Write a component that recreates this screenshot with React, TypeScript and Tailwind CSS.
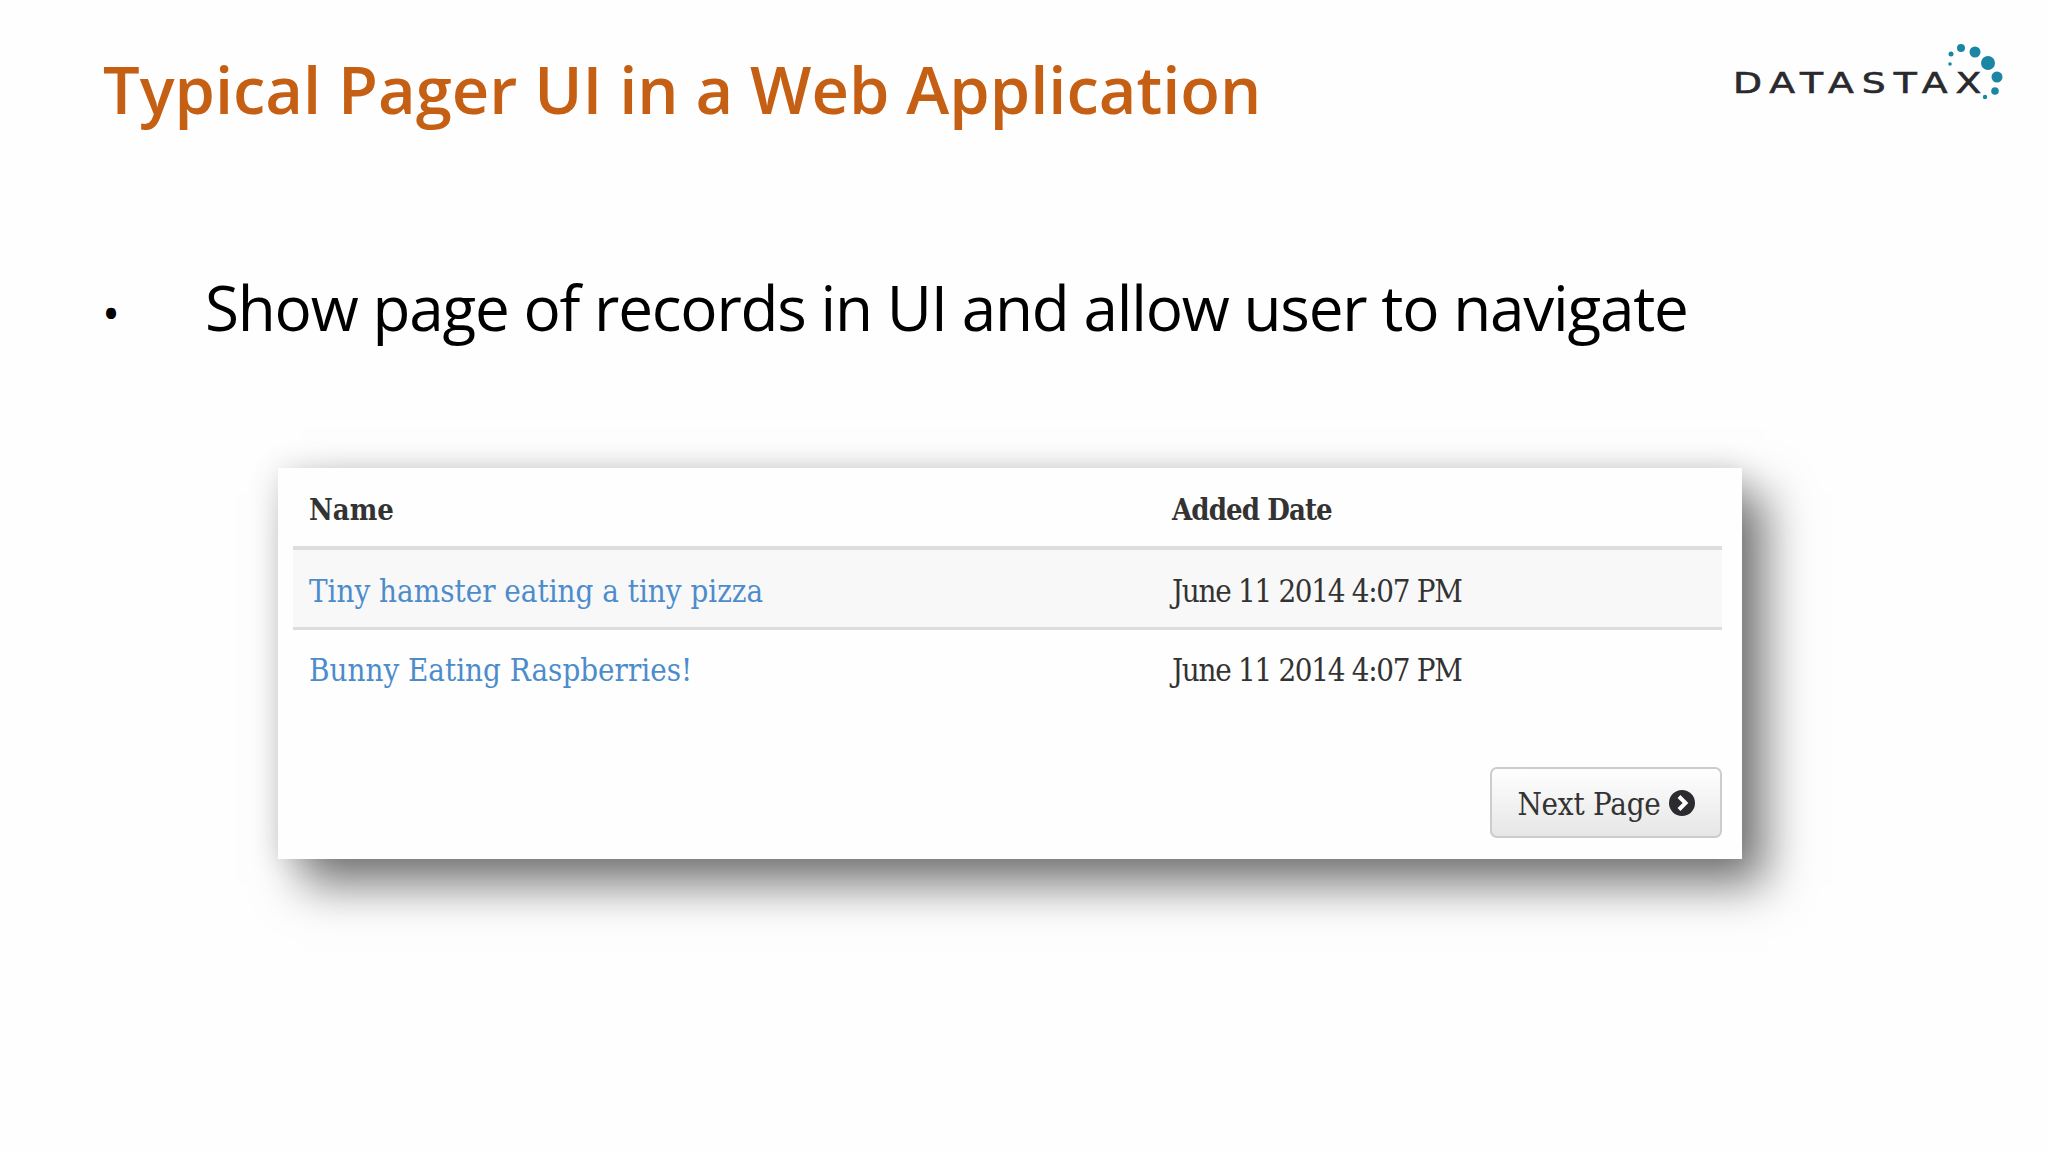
const slab = "font-['DejaVu_Serif',serif] [font-stretch:condensed]";

const rows = [
  { name: "Tiny hamster eating a tiny pizza", date: "June 11 2014 4:07 PM", striped: true },
  { name: "Bunny Eating Raspberries!", date: "June 11 2014 4:07 PM", striped: false },
];

const Logo = () => (
  <div className="relative mt-[40px] h-[70px] w-[280px] shrink-0">
    <span className="absolute left-[-1px] top-[25px] origin-left scale-x-[1.3] font-['DejaVu_Sans',sans-serif] text-[29px] leading-[36px] tracking-[6.1px] text-[#2a2a2e] [-webkit-text-stroke:0.6px_#2a2a2e]">
      DATASTAX
    </span>
    <svg className="absolute left-0 top-0" width="280" height="70" viewBox="0 0 280 70" fill="#1a86a3">
      <circle cx="227" cy="8" r="4" />
      <circle cx="241" cy="12" r="5.5" />
      <circle cx="254" cy="23" r="7" />
      <circle cx="263" cy="37" r="5.5" />
      <circle cx="261" cy="51" r="3.8" />
      <circle cx="251" cy="57" r="2.2" />
      <circle cx="217" cy="14" r="2.5" />
      <circle cx="216" cy="24" r="1.8" />
    </svg>
  </div>
);

const Row = ({ name, date, striped }: { name: string; date: string; striped: boolean }) => (
  <div className={`flex items-center ${striped ? "h-[80px] border-b-[3px] border-[#dddddd] bg-[#f8f8f9] pt-[6px]" : "h-[78px] pt-[3px]"}`}>
    <span className="w-[879px] pl-[16px] text-[#4d8ccb]">{name}</span>
    <span className="tracking-[-1.3px] text-[#333333]">{date}</span>
  </div>
);

export default function App() {
  return (
    <div className="flex h-[1152px] w-[2048px] flex-col overflow-hidden bg-[#fefefe]">
      <header className="flex justify-between pl-[103px] pr-[34px]">
        <h1 className="pt-[44px] font-['Open_Sans',sans-serif] text-[65px] font-semibold leading-[90px] text-[#c55f14]">
          Typical Pager UI in a Web Application
        </h1>
        <Logo />
      </header>

      <div className="mt-[124px] flex items-center pl-[102px] font-['Open_Sans',sans-serif] text-[62px] leading-[84px] text-black">
        <span className="w-[103px] pt-[13px] text-[48px]">•</span>
        <span className="tracking-[-1.2px]">Show page of records in UI and allow user to navigate</span>
      </div>

      <div className="ml-[278px] mt-[113px] flex h-[391px] w-[1464px] flex-col bg-[#fefefe] pl-[15px] pr-[20px] shadow-[24px_26px_44px_rgba(0,0,0,0.52),0_0_28px_rgba(0,0,0,0.12)]">
        <div className={`${slab} text-[31px]`}>
          <div className="flex h-[82px] items-center border-b-[4px] border-[#dddddd] pt-[8px] text-[29px] font-bold text-[#333333]">
            <span className="w-[879px] pl-[16px]">Name</span>
            <span className="tracking-[-0.9px]">Added Date</span>
          </div>
          {rows.map((r) => (
            <Row key={r.name} {...r} />
          ))}
        </div>

        <div className="mt-auto mb-[21px] flex justify-end">
          <button className={`${slab} flex h-[71px] w-[232px] items-center justify-center gap-[8px] rounded-[7px] border-2 border-[#cccccc] bg-gradient-to-b from-white to-[#e6e6e6] text-[31px] tracking-[-0.2px] text-[#333333]`}>
            <span className="pt-[3px]">Next Page</span>
            <svg width="26" height="26" viewBox="0 0 26 26">
              <circle cx="13" cy="13" r="13" fill="#2b2b30" />
              <path d="M10 6.5 L16.5 13 L10 19.5" fill="none" stroke="#ffffff" strokeWidth="4" />
            </svg>
          </button>
        </div>
      </div>
    </div>
  );
}
